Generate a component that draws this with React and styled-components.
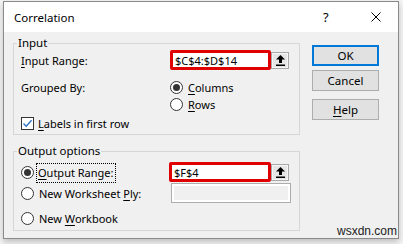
import React from "react";
import styled, { createGlobalStyle } from "styled-components";

const GlobalStyle = createGlobalStyle`
  body {
    margin: 0;
    background: #f4f4f4;
    font-family: "Noto Sans", "Open Sans", sans-serif;
    font-size: 11px;
    color: #000;
  }
`;

const Page = styled.div`
  position: relative;
  height: 244px;
  padding: 1px 0 0 3px;
  box-sizing: border-box;
  overflow: hidden;
`;

const Dialog = styled.div`
  width: 396px;
  height: 238px;
  box-sizing: border-box;
  border: 1px solid #8a8a8a;
  background: #f0f0f0;
  box-shadow: 0 3px 6px rgba(0, 0, 0, 0.22);
  display: flex;
  flex-direction: column;
`;

const TitleBar = styled.div`
  height: 30px;
  flex-shrink: 0;
  background: #fff;
  display: flex;
  align-items: center;
  padding-left: 10px;
`;

const Title = styled.span`
  flex: 1;
  font-size: 11.5px;
`;

const HelpGlyph = styled.span`
  font-size: 13px;
  width: 12px;
  margin-right: 36px;
`;

const CloseBox = styled.span`
  display: flex;
  width: 10px;
  margin-right: 17px;
`;

const Body = styled.div`
  display: flex;
  padding: 4px 19px 0 9px;
`;

const LeftCol = styled.div`
  width: 288px;
  display: flex;
  flex-direction: column;
`;

const Group = styled.fieldset`
  margin: ${(p) => (p.$second ? "9px" : "0")} 0 0 0;
  padding: 0 7px ${(p) => (p.$second ? "2px" : "3px")} 7px;
  border: 1px solid #d6d6d6;
  min-width: 0;
`;

const Legend = styled.legend`
  line-height: 14px;
  padding: 0 1px;
  margin-left: -4px;
  font-size: 11.5px;
`;

const Row = styled.div`
  display: flex;
  align-items: ${(p) => p.$align || "center"};
  height: ${(p) => p.$h || 20}px;
  margin-top: ${(p) => p.$mt || 0}px;
`;

const FieldLabel = styled.span`
  width: 149px;
  flex-shrink: 0;
  line-height: ${(p) => (p.$lh ? p.$lh + "px" : "normal")};
`;

const RangeBox = styled.div`
  width: ${(p) => p.$w || 101}px;
  height: 20px;
  box-sizing: border-box;
  border: 3px solid #e00000;
  border-radius: 2px;
  background: #fff;
  padding-left: 2px;
  display: flex;
  align-items: center;
`;

const PickButton = styled.div`
  width: 18px;
  height: 17px;
  box-sizing: border-box;
  border: 1px solid #a8a8a8;
  background: #e6e6e6;
  box-shadow: inset 0 0 0 1px #f6f6f6;
  display: flex;
  align-items: center;
  justify-content: center;
`;

const DisabledBox = styled.div`
  width: 120px;
  height: 20px;
  box-sizing: border-box;
  border: 1px solid #adadad;
  background: #f0f0f0;
  box-shadow: inset 0 0 0 2px #fff;
  margin-left: 2px;
`;

const RadioStack = styled.div`
  display: flex;
  flex-direction: column;
`;

const RadioItem = styled.div`
  display: flex;
  align-items: center;
  height: 17px;
`;

const RadioCircle = styled.span`
  width: 13px;
  height: 13px;
  box-sizing: border-box;
  border: 1px solid #333;
  border-radius: 50%;
  background: #fff;
  display: flex;
  align-items: center;
  justify-content: center;
  margin-right: 5px;
  flex-shrink: 0;
  &::after {
    content: "";
    display: ${(p) => (p.$on ? "block" : "none")};
    width: 7px;
    height: 7px;
    border-radius: 50%;
    background: #333;
  }
`;

const OptionText = styled.span`
  width: ${(p) => (p.$w ? p.$w + "px" : "auto")};
  flex-shrink: 0;
`;

const Focused = styled.span`
  outline: 1px dotted #000;
  padding: 1px 2px 2px 1px;
  margin-left: -2px;
`;

const CheckBox = styled.span`
  width: 13px;
  height: 13px;
  box-sizing: border-box;
  border: 1px solid #333;
  background: #fff;
  display: flex;
  align-items: center;
  justify-content: center;
  margin-right: 4px;
`;

const U = styled.span`
  text-decoration: underline;
  text-underline-offset: 2px;
`;

const ButtonCol = styled.div`
  margin-left: 12px;
  margin-top: 9px;
  display: flex;
  flex-direction: column;
`;

const DlgButton = styled.div`
  width: 67px;
  height: 21px;
  box-sizing: border-box;
  border: 1px solid ${(p) => (p.$def ? "#0078d7" : "#adadad")};
  box-shadow: ${(p) => (p.$def ? "inset 0 0 0 1px #0078d7" : "none")};
  background: #e1e1e1;
  display: flex;
  align-items: center;
  justify-content: center;
  margin-top: ${(p) => p.$mt || 0}px;
  font-size: 11.5px;
`;

const Watermark = styled.span`
  position: absolute;
  right: 6px;
  bottom: 7px;
  font-family: "Liberation Sans", Arial, sans-serif;
  font-size: 12px;
  color: #222;
  line-height: 12px;
`;

const UpArrow = () => (
  <svg width="9" height="11" viewBox="0 0 9 11">
    <path d="M4.5 0 L9 4.5 H6 V8 H3 V4.5 H0 Z" fill="#000" />
    <rect x="0" y="9.5" width="9" height="1.5" fill="#000" />
  </svg>
);

const CloseIcon = () => (
  <svg width="10" height="10" viewBox="0 0 10 10">
    <path d="M0.5 0.5 L9.5 9.5 M9.5 0.5 L0.5 9.5" stroke="#000" strokeWidth="1" />
  </svg>
);

const CheckMark = () => (
  <svg width="11" height="11" viewBox="0 0 11 11">
    <path d="M1.5 5.5 L4.2 8.3 L9.6 2.2" stroke="#2a72c8" strokeWidth="1.3" fill="none" />
  </svg>
);

export default function App() {
  return (
    <>
      <GlobalStyle />
      <Page>
        <Dialog>
          <TitleBar>
            <Title>Correlation</Title>
            <HelpGlyph>?</HelpGlyph>
            <CloseBox>
              <CloseIcon />
            </CloseBox>
          </TitleBar>
          <Body>
            <LeftCol>
              <Group>
                <Legend>Input</Legend>
                <Row $h={20}>
                  <FieldLabel>
                    <U>I</U>nput Range:
                  </FieldLabel>
                  <RangeBox>$C$4:$D$14</RangeBox>
                  <PickButton>
                    <UpArrow />
                  </PickButton>
                </Row>
                <Row $h={34} $mt={9} $align="flex-start">
                  <FieldLabel $lh={17}>Grouped By:</FieldLabel>
                  <RadioStack>
                    <RadioItem>
                      <RadioCircle $on />
                      <span>
                        <U>C</U>olumns
                      </span>
                    </RadioItem>
                    <RadioItem>
                      <RadioCircle />
                      <span>
                        <U>R</U>ows
                      </span>
                    </RadioItem>
                  </RadioStack>
                </Row>
                <Row $h={16} $mt={2}>
                  <CheckBox>
                    <CheckMark />
                  </CheckBox>
                  <span>
                    <U>L</U>abels in first row
                  </span>
                </Row>
              </Group>
              <Group $second>
                <Legend>Output options</Legend>
                <Row $h={22} $mt={3}>
                  <RadioCircle $on />
                  <OptionText $w={130}>
                    <Focused>
                      <U>O</U>utput Range:
                    </Focused>
                  </OptionText>
                  <RangeBox $w={102}>$F$4</RangeBox>
                  <PickButton>
                    <UpArrow />
                  </PickButton>
                </Row>
                <Row $h={20}>
                  <RadioCircle />
                  <OptionText $w={130}>
                    New Worksheet <U>P</U>ly:
                  </OptionText>
                  <DisabledBox />
                </Row>
                <Row $h={20} $mt={5}>
                  <RadioCircle />
                  <span>
                    New <U>W</U>orkbook
                  </span>
                </Row>
              </Group>
            </LeftCol>
            <ButtonCol>
              <DlgButton $def>OK</DlgButton>
              <DlgButton $mt={4}>Cancel</DlgButton>
              <DlgButton $mt={8}>
                <U>H</U>elp
              </DlgButton>
            </ButtonCol>
          </Body>
        </Dialog>
        <Watermark>wsxdn.com</Watermark>
      </Page>
    </>
  );
}
